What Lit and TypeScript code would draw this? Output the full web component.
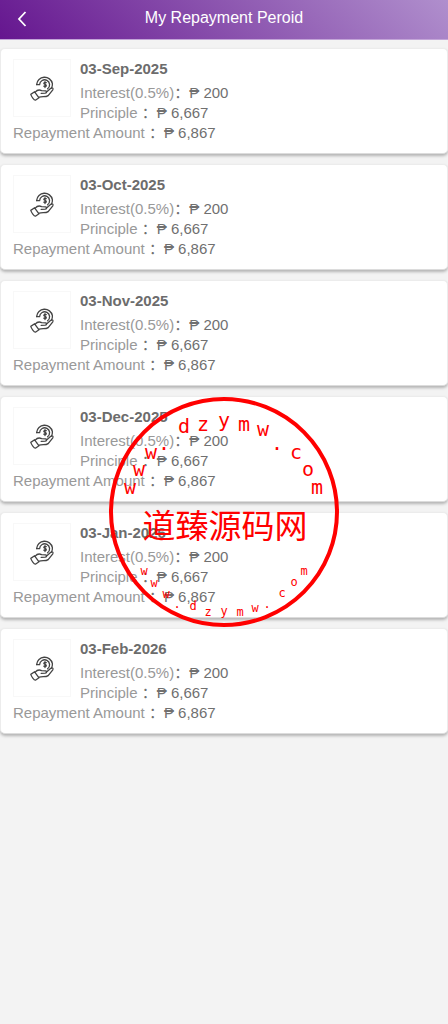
import { LitElement, html, svg, css } from "lit";
import { customElement } from "lit/decorators.js";

const dates = ["03-Sep-2025", "03-Oct-2025", "03-Nov-2025", "03-Dec-2025", "03-Jan-2026", "03-Feb-2026"];

// Letters round the stamp: character, centre x, baseline y.
type Mark = [string, number, number];
const upper: Mark[] = [
  ["w", 22, 98], ["w", 31, 80], ["w", 43, 63], [".", 56, 54], ["d", 76, 37], ["z", 95, 35], ["y", 116, 31],
  ["m", 136, 35], ["w", 155, 40], [".", 169, 54], ["c", 188, 63], ["o", 200, 80], ["m", 209, 98],
];
const lower: Mark[] = [
  ["w", 36, 179], ["w", 46, 191], ["w", 58, 202], [".", 69, 212], ["d", 85, 214], ["z", 100, 220], ["y", 116, 219],
  ["m", 132, 220], ["w", 147, 216], [".", 159, 212], ["c", 174, 201], ["o", 186, 190], ["m", 196, 179],
];

@customElement("repayment-card")
class RepaymentCard extends LitElement {
  static properties = { date: { type: String } };
  declare date: string;

  static styles = css`
    :host {
      display: block;
      box-sizing: border-box;
      padding: 10px 12px;
      background: #fff;
      border: 1px solid #ececec;
      border-bottom-color: #dcdcdc;
      border-radius: 5px;
      box-shadow: 0 2px 3px #b4b4b4;
      color: #707070;
      font-size: 15px;
      line-height: 20px;
    }
    .thumb {
      float: left;
      box-sizing: border-box;
      width: 58px;
      height: 58px;
      margin-right: 9px;
      padding: 16px;
      border: 1px solid #f8f8f8;
    }
    .icon { display: block; width: 24px; height: 24px; overflow: visible; }
    .date { margin: 0 0 4px; font-size: 15px; font-weight: bold; color: #6c6c6c; }
    .line { margin: 0; }
    .total { clear: left; }
    .label { color: #999; }
  `;

  render() {
    return html`
      <div class="thumb">
        <svg class="icon" viewBox="0 0 24 24" fill="none" stroke="#444" stroke-width="1.3" stroke-linejoin="round" stroke-linecap="round" aria-hidden="true">
          <path d="M6.6 8.6A8 8 0 0 1 22.4 7.6Q22.6 10 21.4 12.2" />
          <path d="M6.6 8.6H9.6A5 5 0 1 1 17.6 12.8" />
          <path d="M16.2 6.7c-2.4-1-3.2 1.2-1.3 1.7 2.3.6 1.6 2.9-1.1 1.8M15 5.6v6" />
          <path d="M.8 18.4 4.6 15.8l4.4 6-3.6 2.4c-1.4-.2-4-3.6-4.6-5.8z" />
          <path d="M5.2 16.2c1.8-2.2 4-2.8 6.4-1.6l4 .2c1.6.2 1.4 2.2-.2 2.4l-4.2.2M16 16.4l4.8-4.2c1.4-1 2.8.2 2 1.6l-4.6 5.8c-2.6 1.8-5.8.6-9 1.6" />
        </svg>
      </div>
      <h2 class="date">${this.date}</h2>
      <p class="line"><span class="label">Interest(0.5%)</span>：₱ 200</p>
      <p class="line"><span class="label">Principle </span>：₱ 6,667</p>
      <p class="line total"><span class="label">Repayment Amount </span>：₱ 6,867</p>
    `;
  }
}

@customElement("app-root")
class AppRoot extends LitElement {
  static styles = css`
    :host {
      display: block;
      position: relative;
      min-height: 100vh;
      background: #f3f3f3;
      font-family: "Liberation Sans", Arial, "Noto Sans CJK SC", sans-serif;
    }
    .bar {
      display: grid;
      grid-template-columns: 44px 1fr 44px;
      align-items: center;
      box-sizing: border-box;
      height: 40px;
      padding-bottom: 3px;
      background: linear-gradient(45deg, #65168f, #b08fcd);
      border-bottom: 1px solid #c3a5d8;
      color: #fff;
    }
    .back {
      display: flex;
      align-items: center;
      justify-content: center;
      height: 36px;
      padding: 2px 0 0;
      border: 0;
      background: none;
      color: inherit;
    }
    .title { margin: 0; font-size: 16px; font-weight: normal; line-height: 20px; text-align: center; }
    .list { display: flex; flex-direction: column; gap: 10px; padding: 8px 0; }
    .stamp {
      position: absolute;
      top: 50%;
      left: 50%;
      width: 232px;
      height: 232px;
      transform: translate(-50%, -50%);
      pointer-events: none;
      fill: #f00;
      text-anchor: middle;
      font-family: "DejaVu Sans Mono", monospace;
    }
    .ring { fill: none; stroke: #f00; stroke-width: 4px; }
    .upper { font-size: 20px; }
    .lower { font-size: 12px; }
    .name { font-family: "Noto Sans CJK SC", sans-serif; font-size: 33px; }
  `;

  render() {
    const mark = ([c, x, y]: Mark) => svg`<text x=${x} y=${y}>${c}</text>`;
    return html`
      <header class="bar">
        <button class="back" type="button" aria-label="Back">
          <svg width="10" height="16" viewBox="0 0 10 16" fill="none" stroke="currentColor" stroke-width="1.8"><path d="M8.5 1 2 8l6.5 7" /></svg>
        </button>
        <h1 class="title">My Repayment Peroid</h1>
      </header>
      <main class="list">${dates.map((d) => html`<repayment-card .date=${d}></repayment-card>`)}</main>
      <svg class="stamp" viewBox="0 0 232 232">
        <circle class="ring" cx="116" cy="116" r="113" />
        <g class="upper">${upper.map(mark)}</g>
        <text class="name" x="117" y="142">道臻源码网</text>
        <g class="lower">${lower.map(mark)}</g>
      </svg>
    `;
  }
}
